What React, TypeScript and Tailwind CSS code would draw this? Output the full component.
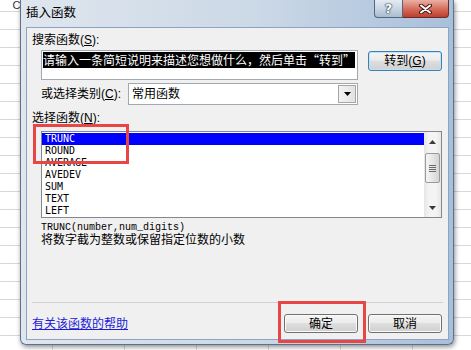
import React from "react";

const funcs = ["TRUNC", "ROUND", "AVERAGE", "AVEDEV", "SUM", "TEXT", "LEFT"];

// spreadsheet that lies behind the dialog
function Sheet() {
  return (
    <div className="flex flex-col ml-[-19px] mt-[-6px]">
      {Array.from({ length: 20 }).map((_, r) => (
        <div key={r} className="flex">
          {Array.from({ length: 8 }).map((_, c) => (
            <div
              key={c}
              className="w-[72px] h-[18px] shrink-0 border-r border-b border-[#d6d9dc] flex items-end justify-center text-[11px] leading-[12px] text-[#333]"
            >
              {r === 0 && c === 0 ? "C" : null}
            </div>
          ))}
        </div>
      ))}
    </div>
  );
}

function WinButton({
  children,
  def = false,
  className = "",
}: {
  children: React.ReactNode;
  def?: boolean;
  className?: string;
}) {
  return (
    <button
      className={
        "w-[74px] flex items-center justify-center rounded-[3px] border text-[12px] leading-[12px] text-black bg-[linear-gradient(#f4f4f4,#ececec_45%,#dedede_50%,#d0d0d0)] " +
        (def
          ? "border-[#3c7fb1] shadow-[inset_0_0_0_1px_#bfe4f8] "
          : "border-[#707070] shadow-[inset_0_0_0_1px_#fbfbfb] ") +
        className
      }
    >
      {children}
    </button>
  );
}

function ArrowDown({ color = "#000" }: { color?: string }) {
  return (
    <svg width="7" height="4" viewBox="0 0 7 4">
      <path d="M0 0h7L3.5 4z" fill={color} />
    </svg>
  );
}

function ArrowUp({ color = "#000" }: { color?: string }) {
  return (
    <svg width="7" height="4" viewBox="0 0 7 4">
      <path d="M0 4h7L3.5 0z" fill={color} />
    </svg>
  );
}

function Dialog() {
  return (
    <div className="absolute left-[20px] top-0 w-[434px] h-[345px] flex flex-col rounded-b-[6px] border border-t-0 border-[#5b7190] bg-[linear-gradient(90deg,#dfe6ee,#cbd8e6_55%,#a8bfdb)] shadow-[1px_2px_5px_rgba(0,0,0,0.45)]">
      {/* title bar */}
      <div className="h-[28px] flex items-start justify-between">
        <div className="pl-[5px] pt-[6px] text-[12.5px] leading-[14px] text-black">
          插入函数
        </div>
        <div className="flex mr-[4px]">
          <div className="w-[29px] h-[18px] rounded-bl-[4px] border border-t-0 border-[#51667f] bg-[linear-gradient(#e4ebf2,#c9d6e4_50%,#a9bcd0)] flex items-center justify-center font-['DejaVu_Sans',sans-serif] font-bold text-[13px] leading-[13px] text-white [text-shadow:0_0_1px_#2b3a4d,0_0_1px_#2b3a4d,0_0_2px_#2b3a4d]">
            ?
          </div>
          <div className="w-[46px] h-[18px] rounded-br-[4px] border border-t-0 border-l-0 border-[#6c2d25] bg-[linear-gradient(#eab0a3,#d6705f_50%,#bf3e2d)] flex items-center justify-center">
            <svg width="13" height="10" viewBox="0 0 13 10">
              <path d="M2 1.5l9 7M11 1.5l-9 7" stroke="#4a1711" strokeWidth="4" strokeLinecap="round" />
              <path d="M2 1.5l9 7M11 1.5l-9 7" stroke="#fff" strokeWidth="2" strokeLinecap="round" />
            </svg>
          </div>
        </div>
      </div>

      {/* client area */}
      <div className="ml-[6px] mr-[5px] w-[421px] h-[311px] bg-[#f0f0f0] shadow-[0_0_0_1px_#8ea3bf] flex flex-col">
        <div className="pl-[5px] pt-[6px] leading-[12px]">
          搜索函数(<u>S</u>):
        </div>
        <div className="flex items-start mt-[4px] ml-[14px]">
          <div className="w-[317px] h-[30px] border border-[#a2a8b0] bg-white p-px overflow-hidden">
            <span className="inline-block h-[16px] leading-[16px] bg-black text-white whitespace-nowrap font-['Noto_Sans_CJK_SC',sans-serif]">
              请输入一条简短说明来描述您想做什么，然后单击“转到”
            </span>
          </div>
          <WinButton def className="ml-[10px] mt-px h-[20px]">
            转到(<u>G</u>)
          </WinButton>
        </div>

        <div className="flex items-center mt-[3px] ml-[14px]">
          <div className="w-[87px] leading-[12px]">
            或选择类别(<u>C</u>):
          </div>
          <div className="w-[230px] h-[22px] border border-[#a2a8b0] bg-white flex items-center">
            <div className="flex-1 pl-[3px] leading-[14px]">常用函数</div>
            <div className="w-[18px] h-[18px] mr-px border border-[#a6a6a6] bg-[linear-gradient(90deg,#f2f2f2,#e2e2e2)] flex items-center justify-center">
              <ArrowDown />
            </div>
          </div>
        </div>

        <div className="pl-[5px] mt-[7px] leading-[12px]">
          选择函数(<u>N</u>):
        </div>
        <div className="mt-[7px] ml-[14px] w-[401px] h-[87px] border border-[#828790] bg-white flex">
          <div className="flex-1 pt-px font-['DejaVu_Sans_Mono',monospace] text-[10px]">
            {funcs.map((f, i) => (
              <div
                key={f}
                className={
                  "h-[12px] leading-[12px] pl-[3px] " +
                  (i === 0 ? "bg-[#0000ff] text-white" : "text-black")
                }
              >
                {f}
              </div>
            ))}
          </div>
          <div className="w-[17px] flex flex-col bg-[linear-gradient(90deg,#e6e6e6,#f4f4f4_30%,#f4f4f4_70%,#e6e6e6)]">
            <div className="h-[17px] flex items-center justify-center pt-[3px]">
              <ArrowUp color="#3a3a3a" />
            </div>
            <div className="mt-[4px] mx-px h-[30px] rounded-[2px] border border-[#9a9a9a] bg-[linear-gradient(90deg,#f5f5f5,#e6e6e6_50%,#d4d4d4)] flex flex-col items-center justify-center gap-px">
              <div className="w-[7px] h-px bg-[#6a6a6a]" />
              <div className="w-[7px] h-px bg-[#6a6a6a]" />
              <div className="w-[7px] h-px bg-[#6a6a6a]" />
              <div className="w-[7px] h-px bg-[#6a6a6a]" />
            </div>
            <div className="mt-auto h-[17px] flex items-center justify-center pb-[1px]">
              <ArrowDown color="#3a3a3a" />
            </div>
          </div>
        </div>

        <div className="ml-[14px] mt-[4px]">
          <div className="h-[12px] leading-[11px] font-['Liberation_Mono',monospace] text-[10px]">
            TRUNC(number,num_digits)
          </div>
          <div className="h-[13px] leading-[13px]">
            将数字截为整数或保留指定位数的小数
          </div>
        </div>

        <div className="mt-[55px] mx-[5px] h-px bg-[#d2d2d2]" />

        <div className="mt-[11px] flex items-center pl-[5px] pr-[6px]">
          <span className="flex-1 leading-[12px] text-[#1c1cd6] underline">
            有关该函数的帮助
          </span>
          <WinButton className="h-[19px]">确定</WinButton>
          <WinButton className="ml-[10px] h-[19px]">取消</WinButton>
        </div>
      </div>
    </div>
  );
}

export default function App() {
  return (
    <div className="relative w-[471px] h-[350px] overflow-hidden bg-white font-['Liberation_Sans','Noto_Sans_CJK_SC',sans-serif] text-[12px] text-black">
      <Sheet />
      <Dialog />
      {/* red annotation frames */}
      <div className="absolute left-[33px] top-[124px] w-[96px] h-[40px] border-[3px] border-[#e84545]" />
      <div className="absolute left-[278px] top-[301px] w-[88px] h-[42px] border-[3px] border-[#e84545]" />
    </div>
  );
}
